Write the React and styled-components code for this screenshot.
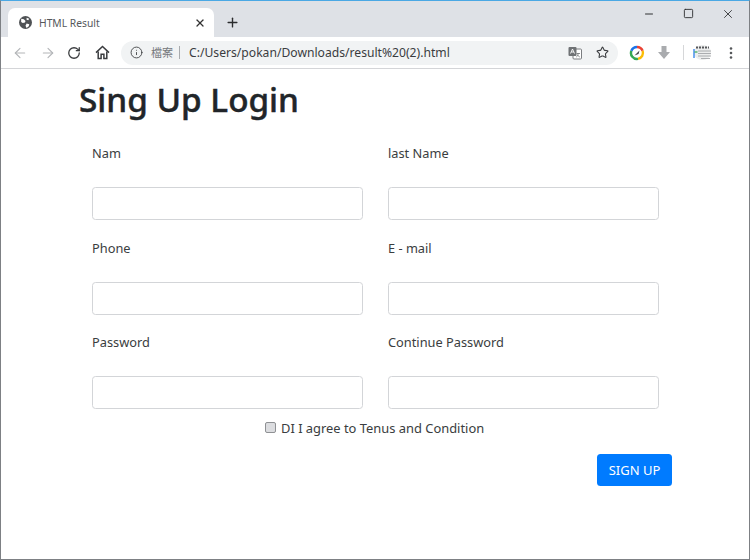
import React from "react";
import styled, { createGlobalStyle } from "styled-components";
import { ArrowLeft, ArrowRight, RotateCw, Info, Star, X, Plus, Minus, Square } from "lucide-react";

const Global = createGlobalStyle`
  html, body { margin: 0; padding: 0; background: #fff; }
  * { box-sizing: border-box; }
`;

const Frame = styled.div`
  width: 750px;
  height: 560px;
  border: 1px solid #7d8084;
  border-top: 1px solid #4aa8e4;
  background: #fff;
  overflow: hidden;
  font-family: "Noto Sans", "Open Sans", sans-serif;
  color: #212529;
`;

const TabStrip = styled.div`
  height: 36px;
  background: #dee1e6;
  display: flex;
  align-items: flex-end;
  padding-left: 7px;
`;

const Tab = styled.div`
  width: 206px;
  height: 29px;
  background: #fff;
  border-radius: 7px 7px 0 0;
  display: flex;
  align-items: center;
  padding: 0 8px 0 11px;
  font-size: 10.3px;
  color: #55585c;
  gap: 7px;
`;

const TabTitle = styled.span`
  flex: 1;
`;

const NewTab = styled.div`
  width: 36px;
  height: 29px;
  display: flex;
  align-items: center;
  justify-content: center;
  color: #2b2c2e;
`;

const WindowControls = styled.div`
  margin-left: auto;
  align-self: flex-start;
  display: flex;
  height: 25px;
  align-items: center;
  color: #2f3032;
  padding-right: 1px;
`;

const WindowButton = styled.div`
  width: 39.5px;
  display: flex;
  justify-content: center;
`;

const Toolbar = styled.div`
  height: 32px;
  background: #fff;
  border-bottom: 1px solid #d4d5d8;
  display: flex;
  align-items: center;
  padding-left: 11px;
`;

const NavButton = styled.div`
  width: 27.5px;
  display: flex;
  justify-content: flex-start;
  color: ${(p) => (p.$dim ? "#b3b5b8" : "#3a3c3f")};
`;

const Omnibox = styled.div`
  width: 497px;
  height: 24px;
  margin-left: -1px;
  border-radius: 12px;
  background: #f1f3f4;
  display: flex;
  align-items: center;
  padding: 0 9px 0 9px;
  font-size: 12.15px;
  color: #3a3c3f;
`;

const Scheme = styled.span`
  font-family: "Noto Sans CJK TC", sans-serif;
  font-size: 11px;
  color: #75787c;
  margin-left: 8px;
  padding-right: 6px;
  border-right: 1px solid #a8abae;
  line-height: 13px;
`;

const Url = styled.span`
  flex: 1;
  margin-left: 9px;
`;

const OmniIcons = styled.div`
  display: flex;
  align-items: center;
  gap: 14px;
  color: #3a3c3f;
`;

const Extensions = styled.div`
  display: flex;
  align-items: center;
  margin-left: 11px;
`;

const ExtensionGap = styled.span`
  width: 12px;
`;

const Divider = styled.div`
  width: 1px;
  height: 15px;
  background: #d6d7d9;
  margin: 0 9px 0 12px;
`;

const Menu = styled.div`
  margin-left: 12px;
  display: flex;
`;

const Page = styled.main`
  padding-left: 78px;
`;

const Title = styled.h1`
  margin: 0;
  padding-top: 8px;
  height: 70px;
  font-size: 33.3px;
  line-height: 44px;
  font-weight: 500;
  -webkit-text-stroke: 0.45px #212529;
  color: #212529;
`;

const Grid = styled.form`
  margin-left: 13px;
  width: 567px;
  display: grid;
  grid-template-columns: 271px 271px;
  column-gap: 25px;
  row-gap: 13.5px;
`;

const Field = styled.div`
  display: flex;
  flex-direction: column;
`;

const Label = styled.label`
  font-size: 12.8px;
  line-height: 20px;
  height: 48px;
  padding-top: 4px;
  color: #3a3d40;
`;

const Input = styled.input`
  height: 33px;
  width: 100%;
  border: 1px solid #d3d5d8;
  border-radius: 3.5px;
  background: #fff;
  outline: none;
`;

const AgreeRow = styled.div`
  width: 600px;
  height: 24px;
  margin-top: 7px;
  display: flex;
  align-items: center;
  padding-left: 186px;
  font-size: 12.9px;
  color: #3a3d40;
`;

const Check = styled.input`
  appearance: none;
  width: 11px;
  height: 11px;
  margin: -2px 5px 0 0;
  border: 1px solid #8f9194;
  border-radius: 2px;
  background: #dcdde0;
`;

const Actions = styled.div`
  width: 593px;
  margin-top: 14px;
  display: flex;
  justify-content: flex-end;
`;

const SubmitButton = styled.button`
  width: 75px;
  height: 32px;
  background: #007bff;
  border: none;
  border-radius: 3.5px;
  color: #fff;
  font-family: inherit;
  font-size: 13px;
  padding: 0;
`;

const Globe = () => (
  <svg width="13" height="13" viewBox="0 0 24 24">
    <circle cx="12" cy="12" r="12" fill="#4f5255" />
    <path d="M4 5l5 1 3 3-1 3-4 1-3-2zM14 3l5 2-2 3-3-1zM14 14l5 1-1 4-4 3-2-4z" fill="#fff" />
  </svg>
);

const HomeIcon = () => (
  <svg width="15" height="15" viewBox="0 0 15 15" fill="none" stroke="currentColor" strokeWidth="1.5" strokeLinejoin="miter">
    <path d="M1 7.6L7.5 1.5 14 7.6" />
    <path d="M3.2 6.5v7h2.9V9.2h2.8v4.3h2.9v-7" />
  </svg>
);

const Translate = () => (
  <svg width="14" height="14" viewBox="0 0 14 14">
    <rect x="5" y="3" width="8.5" height="10" rx="1" fill="#fff" stroke="#7b7d80" />
    <rect x="0.5" y="1" width="8" height="9" rx="1" fill="#6f7275" />
    <path d="M2.5 7.5L4.5 3l2 4.5M3.2 6h2.6" stroke="#fff" strokeWidth="0.9" fill="none" />
    <path d="M8.5 7.5h3.5M10 7v1c0 1.5-.8 2.5-1.6 3M9.6 9c.5 1 1.2 1.6 2.2 2" stroke="#6f7275" strokeWidth="0.8" fill="none" />
  </svg>
);

const Speed = () => (
  <svg width="16" height="16" viewBox="0 0 16 16">
    <path d="M8 2a6 6 0 0 1 5.6 3.8" stroke="#ea4335" strokeWidth="2.4" fill="none" />
    <path d="M13.6 5.8A6 6 0 0 1 9 13.9" stroke="#fbbc05" strokeWidth="2.4" fill="none" />
    <path d="M9 13.9A6 6 0 0 1 2.4 5.8" stroke="#34a853" strokeWidth="2.4" fill="none" />
    <path d="M2.4 5.8A6 6 0 0 1 8 2" stroke="#1a73e8" strokeWidth="2.4" fill="none" />
    <path d="M5.5 10.5L9 7l1.5-1.5L9.5 9z" fill="#3c4043" />
  </svg>
);

const Download = () => (
  <svg width="14" height="16" viewBox="0 0 14 16">
    <path d="M4.5 1h5v6H13l-6 7-6-7h3.5z" fill="#a9abae" />
  </svg>
);

const Calendar = () => (
  <svg width="19" height="17" viewBox="0 0 19 17">
    <path d="M1 8a8.5 7 0 0 1 17 0v1a8.5 7 0 0 1-17 0z" fill="#eceded" />
    <path d="M3 3.5h13" stroke="#55575a" strokeWidth="2" strokeDasharray="2 1" />
    <path d="M1 5v9" stroke="#1a73e8" strokeWidth="1.2" />
    <path d="M1.5 8h3" stroke="#34a853" strokeWidth="1.2" />
    <path d="M5 7h13M5 9.5h13M5 12h13M8 14.5h9" stroke="#9a9c9f" strokeWidth="0.8" />
  </svg>
);

const Dots = () => (
  <svg width="14" height="14" viewBox="0 0 14 14" fill="#55575a">
    <circle cx="7" cy="2.5" r="1.3" />
    <circle cx="7" cy="7" r="1.3" />
    <circle cx="7" cy="11.5" r="1.3" />
  </svg>
);

function Browser() {
  return (
    <>
      <TabStrip>
        <Tab>
          <Globe />
          <TabTitle>HTML Result</TabTitle>
          <X size={12} strokeWidth={2.6} color="#333" />
        </Tab>
        <NewTab><Plus size={15} strokeWidth={2.2} /></NewTab>
        <WindowControls>
          <WindowButton><Minus size={12} strokeWidth={2} /></WindowButton>
          <WindowButton><Square size={11} strokeWidth={2} /></WindowButton>
          <WindowButton><X size={14} strokeWidth={1.5} /></WindowButton>
        </WindowControls>
      </TabStrip>
      <Toolbar>
        <NavButton $dim><ArrowLeft size={16} strokeWidth={1.7} /></NavButton>
        <NavButton $dim><ArrowRight size={16} strokeWidth={1.7} /></NavButton>
        <NavButton><RotateCw size={14} strokeWidth={2.2} /></NavButton>
        <NavButton><HomeIcon /></NavButton>
        <Omnibox>
          <Info size={13} strokeWidth={1.6} />
          <Scheme>檔案</Scheme>
          <Url>C:/Users/pokan/Downloads/result%20(2).html</Url>
          <OmniIcons>
            <Translate />
            <Star size={13} strokeWidth={2} />
          </OmniIcons>
        </Omnibox>
        <Extensions>
          <Speed />
          <ExtensionGap />
          <Download />
          <Divider />
          <Calendar />
          <Menu><Dots /></Menu>
        </Extensions>
      </Toolbar>
    </>
  );
}

const fields = [
  "Nam",
  "last Name",
  "Phone",
  "E - mail",
  "Password",
  "Continue Password",
];

export default function App() {
  return (
    <Frame>
      <Global />
      <Browser />
      <Page>
        <Title>Sing Up Login</Title>
        <Grid onSubmit={(e) => e.preventDefault()}>
          {fields.map((f) => (
            <Field key={f}>
              <Label>{f}</Label>
              <Input type={f.includes("Password") ? "password" : "text"} />
            </Field>
          ))}
        </Grid>
        <AgreeRow>
          <Check type="checkbox" />
          DI I agree to Tenus and Condition
        </AgreeRow>
        <Actions>
          <SubmitButton>SIGN UP</SubmitButton>
        </Actions>
      </Page>
    </Frame>
  );
}
